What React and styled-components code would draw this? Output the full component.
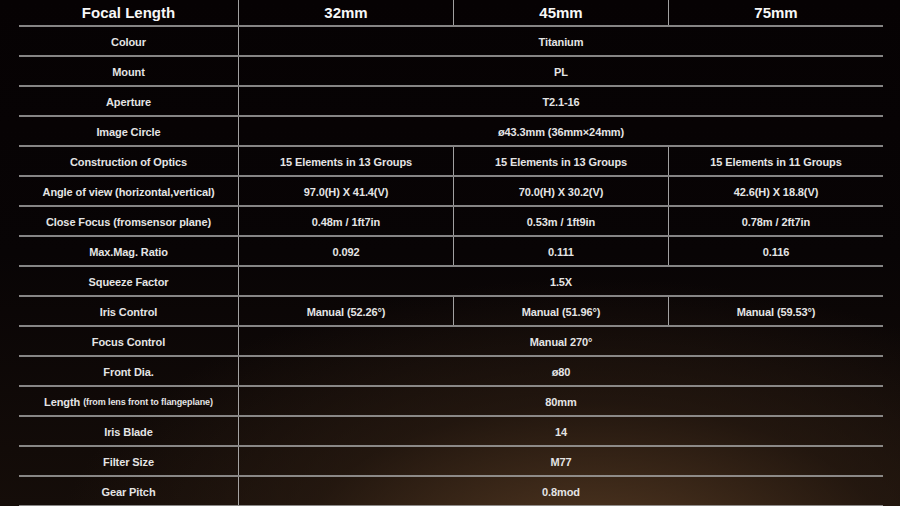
import styled, { createGlobalStyle } from "styled-components";

const GlobalStyle = createGlobalStyle`
  html, body {
    margin: 0;
    padding: 0;
  }
  body {
    width: 900px;
    height: 506px;
    overflow: hidden;
    background:
      radial-gradient(ellipse 60% 55% at 66% 110%, rgba(88, 60, 36, 0.95), rgba(48, 32, 20, 0.55) 55%, transparent 100%),
      linear-gradient(180deg, #060203 0%, #080405 50%, #150d09 100%);
    font-family: "Liberation Sans", Arial, sans-serif;
    color: #ececec;
  }
`;

const Page = styled.div`
  width: 900px;
  height: 506px;
  padding-left: 19px;
  box-sizing: border-box;
`;

const Table = styled.div`
  width: 864px;
  display: flex;
  flex-direction: column;
`;

const Row = styled.div`
  display: grid;
  grid-template-columns: 220px 215px 215px 214px;
  height: ${(p) => (p.$head ? "27px" : "30px")};
  box-sizing: border-box;
  border-bottom: 2px solid rgba(165, 165, 165, 0.8);
`;

const Cell = styled.div`
  display: flex;
  align-items: center;
  justify-content: center;
  grid-column: span ${(p) => p.$span || 1};
  box-sizing: border-box;
  border-right: ${(p) => (p.$line ? "1px solid rgba(200, 200, 200, 0.8)" : "none")};
  font-size: ${(p) => (p.$head ? "15px" : "11px")};
  font-weight: bold;
  letter-spacing: ${(p) => (p.$head ? "0" : "-0.1px")};
  color: ${(p) => (p.$head ? "#f7f7f7" : "#e4e4e4")};
  white-space: nowrap;
  padding-top: ${(p) => (p.$head ? "0" : "1px")};
`;

const Small = styled.span`
  font-size: 9px;
  margin-left: 3px;
`;

const rows = [
  ["Colour", "Titanium"],
  ["Mount", "PL"],
  ["Aperture", "T2.1-16"],
  ["Image Circle", "ø43.3mm (36mm×24mm)"],
  ["Construction of Optics", "15 Elements in 13 Groups", "15 Elements in 13 Groups", "15 Elements in 11 Groups"],
  ["Angle of view (horizontal,vertical)", "97.0(H) X 41.4(V)", "70.0(H) X 30.2(V)", "42.6(H) X 18.8(V)"],
  ["Close Focus (fromsensor plane)", "0.48m / 1ft7in", "0.53m / 1ft9in", "0.78m / 2ft7in"],
  ["Max.Mag. Ratio", "0.092", "0.111", "0.116"],
  ["Squeeze Factor", "1.5X"],
  ["Iris Control", "Manual (52.26°)", "Manual (51.96°)", "Manual (59.53°)"],
  ["Focus Control", "Manual 270°"],
  ["Front Dia.", "ø80"],
  [
    <>
      Length<Small>(from lens front to flangeplane)</Small>
    </>,
    "80mm",
  ],
  ["Iris Blade", "14"],
  ["Filter Size", "M77"],
  ["Gear Pitch", "0.8mod"],
];

export default function App() {
  return (
    <Page>
      <GlobalStyle />
      <Table>
        <Row $head>
          <Cell $head $line>Focal Length</Cell>
          <Cell $head $line>32mm</Cell>
          <Cell $head $line>45mm</Cell>
          <Cell $head>75mm</Cell>
        </Row>
        {rows.map(([label, ...values], i) => (
          <Row key={i}>
            <Cell $line>{label}</Cell>
            {values.length === 1 ? (
              <Cell $span={3}>{values[0]}</Cell>
            ) : (
              values.map((v, j) => (
                <Cell key={j} $line={j < values.length - 1}>
                  {v}
                </Cell>
              ))
            )}
          </Row>
        ))}
      </Table>
    </Page>
  );
}
